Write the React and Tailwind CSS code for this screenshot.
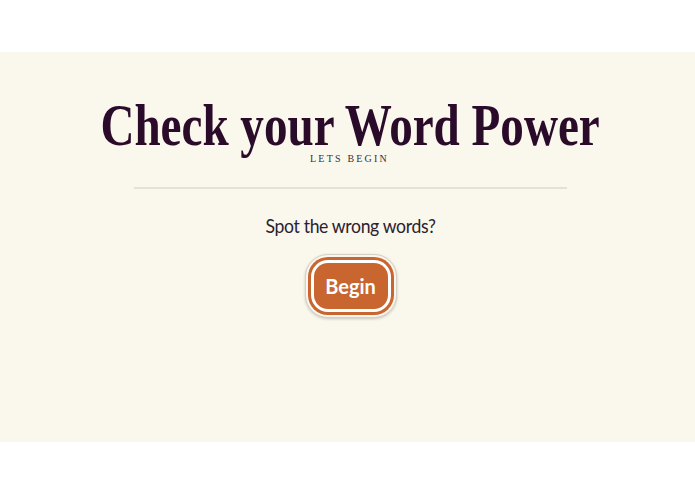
export default function App() {
  return (
    <div className="w-[695px] h-[494px] bg-white flex flex-col">
      <div className="mt-[52px] h-[390px] bg-[#faf7ec] flex flex-col items-center">
        <h1
          className="mt-[37px] text-[60px] leading-[72px] font-bold text-[#2b0b2a] whitespace-nowrap scale-x-[0.785] ml-[6px]"
          style={{ fontFamily: '"Liberation Serif", serif' }}
        >
          Check your Word Power
        </h1>
        <div
          className="-mt-[8px] ml-[4px] text-[10px] leading-[12px] tracking-[2.2px] text-[#3a3036]"
          style={{ fontFamily: '"Liberation Serif", serif' }}
        >
          LETS BEGIN
        </div>
        <div className="mt-[22px] ml-[6px] w-[433px] h-[2px] bg-[#e2e2d6]" />
        <div
          className="mt-[22px] ml-[6px] text-[20px] leading-[28px] text-[#2a2230] tracking-[-0.4px] whitespace-nowrap scale-x-[0.88]"
          style={{ fontFamily: 'Lato, sans-serif' }}
        >
          Spot the wrong words?
        </div>
        <div className="mt-[15px] ml-[6px] rounded-[23px] border border-[#d6d1c4] bg-[#fbf6ee] p-[2px] shadow-[0_1px_3px_rgba(0,0,0,0.2)]">
          <div className="rounded-[20px] bg-[#c9652f] p-[3px]">
            <div className="rounded-[17px] bg-white p-[3px]">
              <div
                className="w-[74px] h-[46px] rounded-[14px] bg-[#c9652f] flex items-center justify-center text-white font-bold text-[20px]"
                style={{ fontFamily: 'Lato, sans-serif' }}
              >
                Begin
              </div>
            </div>
          </div>
        </div>
      </div>
    </div>
  );
}
